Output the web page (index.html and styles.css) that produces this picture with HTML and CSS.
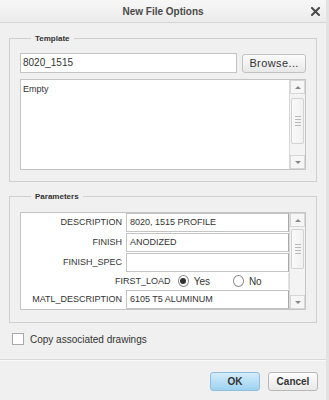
FILE: index.html
```html
<!DOCTYPE html>
<html lang="en">
<head>
    <meta charset="UTF-8">
    <meta name="viewport" content="width=device-width, initial-scale=1.0">
    <title>New File Options</title>
    <link rel="stylesheet" href="styles.css">
</head>
<body>
<div class="dialog">
    <div class="titlebar">
        <span></span>
        <span class="title">New File Options</span>
        <span class="close">
            <svg width="9" height="9" viewBox="0 0 9 9"><path d="M1 1 L8 8 M8 1 L1 8" stroke="#4a4a4a" stroke-width="2" stroke-linecap="square"/></svg>
        </span>
    </div>

    <div class="content">
        <fieldset class="group group-template">
            <legend>Template</legend>
            <div class="pick-row">
                <div class="text-field">8020_1515</div>
                <button class="btn btn-browse">Browse...</button>
            </div>
            <div class="listbox">
                <div class="list-items">
                    <div class="list-item">Empty</div>
                </div>
                <div class="scrollbar">
                    <div class="sb-arrow"><span class="tri-up"></span></div>
                    <div class="sb-track"><div class="sb-thumb thumb-list"><i></i><i></i><i></i><i></i></div></div>
                    <div class="sb-arrow"><span class="tri-down"></span></div>
                </div>
            </div>
        </fieldset>

        <fieldset class="group group-params">
            <legend>Parameters</legend>
            <div class="param-table">
                <div class="param-rows">
                    <div class="param-row">
                        <span class="param-name">DESCRIPTION</span>
                        <span class="param-value">8020, 1515 PROFILE</span>
                    </div>
                    <div class="param-row">
                        <span class="param-name">FINISH</span>
                        <span class="param-value">ANODIZED</span>
                    </div>
                    <div class="param-row">
                        <span class="param-name">FINISH_SPEC</span>
                        <span class="param-value"></span>
                    </div>
                    <div class="param-row radio-row">
                        <span class="radio-label">FIRST_LOAD</span>
                        <span class="radio checked"></span><span class="radio-text">Yes</span>
                        <span class="radio"></span><span class="radio-text">No</span>
                    </div>
                    <div class="param-row">
                        <span class="param-name">MATL_DESCRIPTION</span>
                        <span class="param-value">6105 T5 ALUMINUM</span>
                    </div>
                    <div class="param-row">
                        <span class="param-name"></span>
                        <span class="param-value"></span>
                    </div>
                </div>
                <div class="scrollbar">
                    <div class="sb-arrow"><span class="tri-up"></span></div>
                    <div class="sb-track"><div class="sb-thumb thumb-params"><i></i><i></i><i></i><i></i></div></div>
                    <div class="sb-arrow"><span class="tri-down"></span></div>
                </div>
            </div>
        </fieldset>

        <label class="check-row">
            <span class="checkbox"></span>
            <span>Copy associated drawings</span>
        </label>
    </div>

    <div class="footer">
        <button class="btn btn-ok">OK</button>
        <button class="btn btn-cancel">Cancel</button>
    </div>
</div>
</body>
</html>
```

FILE: styles.css
```css
* { box-sizing: border-box; }
body { margin: 0; background: #f0f0f0; font-family: "Liberation Sans", Arial, sans-serif; color: #333; }

.dialog { width: 329px; height: 400px; background: #f0f0f0; border-right: 3px solid #e2e2e2; overflow: hidden; }

.titlebar { height: 23px; display: grid; grid-template-columns: 1fr auto 1fr; align-items: center; background: linear-gradient(#f7f7f7, #ececec); border-bottom: 1px solid #d4d4d4; }
.title { font-size: 10px; font-weight: bold; color: #4a4a4a; }
.close { justify-self: end; padding-right: 6px; display: flex; }

.content { padding: 9px 9px 0 9px; }

.group { margin: 0; border: 1px solid #cfcfcf; min-width: 0; }
.group legend { margin-left: 11px; padding: 2px 4px 0; font-size: 8px; font-weight: bold; line-height: 10px; color: #333; }
.group-template { padding: 9px 10px 11px 10px; }
.group-params { margin-top: 8px; padding: 10px 10px 12px 10px; }

.pick-row { display: flex; align-items: center; gap: 5px; }
.text-field { width: 218px; height: 20px; background: #fff; border: 1px solid #c4c4c4; font-size: 10px; line-height: 18px; padding-left: 2px; }

.btn { font-family: "Liberation Sans", Arial, sans-serif; color: #333; border-radius: 3px; padding: 0; cursor: pointer; }
.btn-browse { width: 64px; height: 19px; font-size: 11px; letter-spacing: 0.4px; background: linear-gradient(#fbfbfb, #e8e8e8); border: 1px solid #c2c2c2; }

.listbox { display: flex; margin-top: 6px; height: 91px; background: #fff; border: 1px solid #c4c4c4; }
.list-items { flex: 1; }
.list-item { font-size: 9px; padding: 4px 0 0 2px; }

.scrollbar { width: 16px; display: flex; flex-direction: column; background: #f3f3f3; border-left: 1px solid #d8d8d8; }
.sb-arrow { height: 14px; display: flex; align-items: center; justify-content: center; border: 1px solid #d6d6d6; background: #f6f6f6; }
.sb-track { flex: 1; padding: 0 1px; }
.sb-thumb { background: linear-gradient(90deg, #fafafa, #f0f0f0); border: 1px solid #d2d2d2; border-radius: 2px; display: flex; flex-direction: column; align-items: center; justify-content: center; gap: 2px; }
.sb-thumb i { display: block; width: 6px; height: 1px; background: #b8b8b8; }
.thumb-list { margin-top: 4px; height: 46px; }
.thumb-params { margin-top: 2px; height: 40px; }
.tri-up { width: 0; height: 0; border-left: 3px solid transparent; border-right: 3px solid transparent; border-bottom: 3px solid #888; }
.tri-down { width: 0; height: 0; border-left: 3px solid transparent; border-right: 3px solid transparent; border-top: 3px solid #888; }

.param-table { display: flex; height: 98px; background: #fff; border: 1px solid #c4c4c4; overflow: hidden; }
.param-rows { flex: 1; overflow: hidden; }
.param-row { display: flex; height: 19px; align-items: stretch; font-size: 9px; }
.param-row + .param-row { margin-top: 1px; }
.param-name { width: 105px; text-align: right; padding-right: 4px; line-height: 19px; }
.param-value { flex: 1; border: 1px solid #c4c4c4; border-right-color: #aaa; padding-left: 3px; line-height: 17px; }

.radio-row { height: 16px; align-items: center; padding-left: 94px; border-right: 1px solid #e2e2e2; }
.radio-label { margin-right: 7px; }
.radio { width: 12px; height: 12px; border-radius: 50%; border: 1px solid #8a8a8a; background: #fff; display: flex; align-items: center; justify-content: center; }
.radio.checked::after { content: ""; width: 6px; height: 6px; border-radius: 50%; background: #333; }
.radio-text { margin-left: 5px; width: 43px; font-size: 10px; }

.check-row { display: flex; align-items: center; gap: 6px; margin: 10px 0 0 3px; font-size: 10px; }
.checkbox { width: 12px; height: 12px; background: #fff; border: 1px solid #a8a8a8; }

.footer { margin-top: 14px; border-top: 1px solid #d8d8d8; box-shadow: inset 0 1px 0 #fafafa; display: flex; justify-content: flex-end; gap: 8px; padding: 12px 8px 0 0; }
.btn-ok, .btn-cancel { width: 50px; height: 19px; font-size: 10px; font-weight: bold; }
.btn-ok { background: linear-gradient(#d3ecfb, #9dd2f1); border: 1px solid #8cc0de; }
.btn-cancel { background: linear-gradient(#fdfdfd, #e8e8e8); border: 1px solid #b8b8b8; }
```
